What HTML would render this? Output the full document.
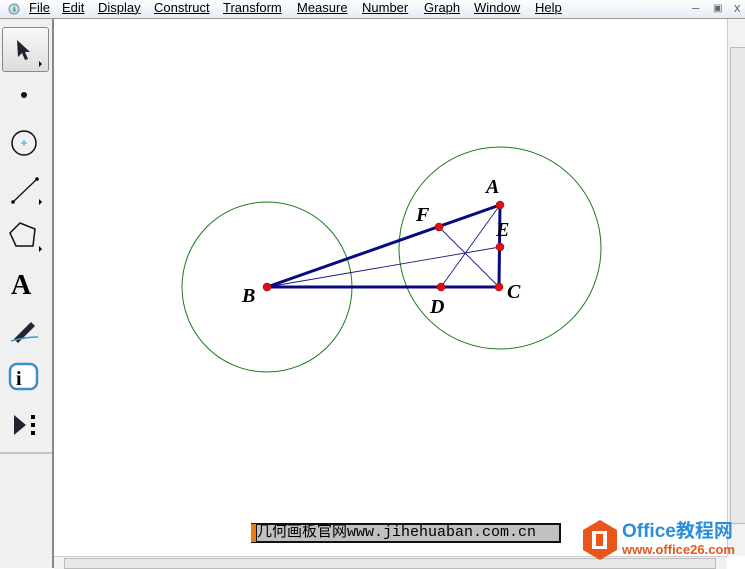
<!DOCTYPE html><html><head><style>
body{margin:0;width:745px;height:568px;overflow:hidden;background:#fff;font-family:"Liberation Sans",sans-serif;position:relative}
.menu{position:absolute;left:0;top:0;width:745px;height:18px;background:linear-gradient(#fdfdfe,#e6ecf5);font-size:13px;border-bottom:1px solid #999}
.menu span{position:absolute;top:0px;text-decoration:underline;text-decoration-thickness:1px}
.tb{position:absolute;left:0;top:19px;width:52px;height:549px;background:#f0f0f0;border-right:2px solid #888}
.vs{position:absolute;left:727px;top:19px;width:18px;height:537px;background:#f2f2f2;border-left:1px solid #ccc}
.hs{position:absolute;left:54px;top:556px;width:673px;height:12px;background:#f2f2f2;border-top:1px solid #ccc}
</style></head><body>
<div class="menu">
<svg style="position:absolute;left:8px;top:3px" width="12" height="12"><circle cx="6" cy="6" r="5" fill="#cde" stroke="#789"/><path d="M6 2 L8 8 L5 9Z" fill="#4a7"/></svg>
<span style="left:29px">File</span><span style="left:62px">Edit</span><span style="left:98px">Display</span><span style="left:154px">Construct</span><span style="left:223px">Transform</span><span style="left:297px">Measure</span><span style="left:362px">Number</span><span style="left:424px">Graph</span><span style="left:474px">Window</span><span style="left:535px">Help</span>
<span style="left:692px;text-decoration:none;color:#666">–</span><span style="left:713px;text-decoration:none;color:#666;font-size:10px;top:3px">▣</span><span style="left:734px;text-decoration:none;color:#666">x</span>
</div>
<div class="tb">
<div style="position:absolute;left:2px;top:8px;width:45px;height:43px;border:1px solid #888;border-radius:3px;background:linear-gradient(#f8f8f8,#ddd)"></div>
<svg width="52" height="440" style="position:absolute;left:0;top:0">
<path d="M17 21 L30 33 L25 33 L28 40 L25 41 L22 34 L18 38Z" fill="#223"/><path d="M39 42 l3 3 -3 3z" fill="#111"/>
<circle cx="24" cy="76" r="3" fill="#111"/>
<circle cx="24" cy="124" r="12" fill="none" stroke="#111" stroke-width="1.5"/><path d="M21 124h6M24 121v6" stroke="#49c"/>
<path d="M13 183 L37 160" stroke="#111" stroke-width="1.3"/><circle cx="13" cy="183" r="1.8"/><circle cx="37" cy="160" r="1.8"/><path d="M39 180 l3 3 -3 3z"/>
<path d="M20 204 L35 210 L33 227 L16 227 L10 214Z" fill="none" stroke="#111" stroke-width="1.5"/><path d="M39 227 l3 3 -3 3z"/>
<text x="11" y="275" font-family="Liberation Serif" font-weight="bold" font-size="28">A</text>
<path d="M14 320 L31 303 L35 307 L18 324Z" fill="#223"/><path d="M11 322 Q25 318 38 318" stroke="#49c" fill="none" stroke-width="1.5"/>
<rect x="10" y="345" width="27" height="25" rx="7" fill="#fff" stroke="#3a8fc9" stroke-width="2.5"/><text x="16" y="366" font-family="Liberation Serif" font-weight="bold" font-size="20">i</text>
<path d="M14 396 L26 406 L14 416Z" fill="#223"/><rect x="31" y="396" width="4" height="4"/><rect x="31" y="404" width="4" height="4"/><rect x="31" y="412" width="4" height="4"/>
<path d="M0 434 H52" stroke="#999"/>
</svg></div>
<div class="vs"><div style="position:absolute;left:2px;top:28px;width:14px;height:475px;background:#e8e8e8;border:1px solid #bbb"></div></div>
<div class="hs"><div style="position:absolute;left:10px;top:1px;width:650px;height:9px;background:#e8e8e8;border:1px solid #bbb"></div></div>
<svg width="745" height="568" style="position:absolute;left:0;top:0">
<circle cx="267" cy="287" r="85" fill="none" stroke="#1a7a1a"/>
<circle cx="500" cy="248" r="101" fill="none" stroke="#1a7a1a"/>
<path d="M439 227 L499 287 M500 205 L441 287 M267 287 L500 247" stroke="#1a1a7a" stroke-width="0.9"/>
<path d="M267 287 L500 205 L499 287 Z" fill="none" stroke="#0a0a80" stroke-width="3"/>
<g fill="#e01010" stroke="#800" stroke-width="0.5"><circle cx="267" cy="287" r="4"/><circle cx="500" cy="205" r="4"/><circle cx="499" cy="287" r="4"/><circle cx="500" cy="247" r="4"/><circle cx="439" cy="227" r="4"/><circle cx="441" cy="287" r="4"/></g>
<g font-family="Liberation Serif" font-weight="bold" font-style="italic" font-size="20"><text x="486" y="193">A</text><text x="242" y="302">B</text><text x="507" y="298">C</text><text x="430" y="313">D</text><text x="496" y="236">E</text><text x="416" y="221">F</text></g>
</svg>
<div style="position:absolute;left:251px;top:523px;width:310px;height:20px;background:#111"><div style="position:absolute;left:0;top:1px;width:5px;height:18px;background:#e87d10"></div><div style="position:absolute;left:6px;top:2px;width:302px;height:16px;background:#c0c0c0;font-size:15px;line-height:16px;font-family:'Liberation Mono','Noto Sans CJK SC',monospace;white-space:nowrap">几何画板官网www.jihehuaban.com.cn</div></div>
<svg width="40" height="44" style="position:absolute;left:580px;top:518px"><path d="M20 2 L37 12 L37 32 L20 42 L3 32 L3 12Z" fill="#e8561c"/><rect x="12" y="13" width="15" height="18" fill="#fff"/><rect x="16" y="16" width="7" height="12" fill="#e8561c"/></svg>
<div style="position:absolute;left:622px;top:521px;font-size:19px;font-weight:bold;color:#2a8fd8;font-family:'Liberation Sans','Noto Sans CJK SC',sans-serif;line-height:22px">Office教程网</div>
<div style="position:absolute;left:622px;top:543px;font-size:13px;font-weight:bold;color:#e8561c;line-height:14px">www.office26.com</div>
</body></html>
